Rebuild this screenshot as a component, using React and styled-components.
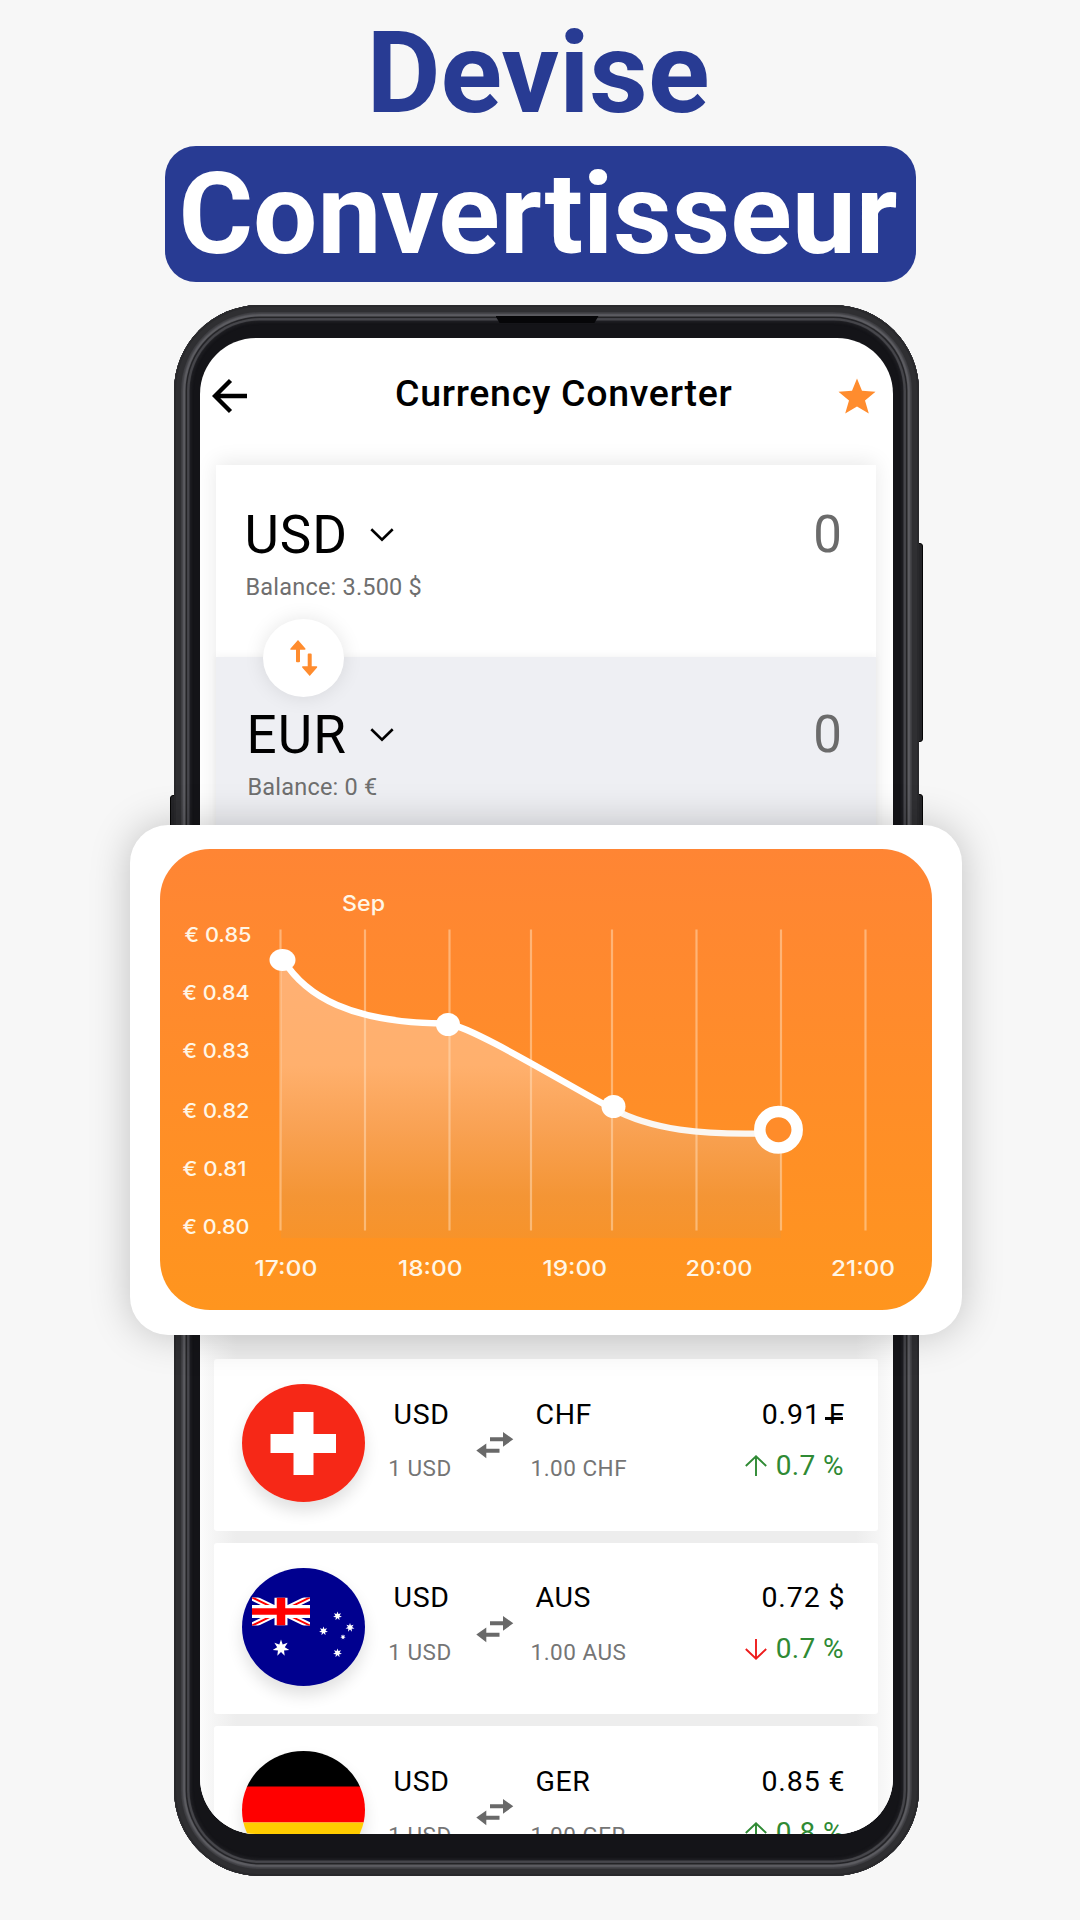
import React from "react";
import styled, { createGlobalStyle } from "styled-components";

const GlobalStyle = createGlobalStyle`
  * {
    box-sizing: border-box;
  }

  body {
    margin: 0;
    background-color: #f7f7f7;
    font-family: Roboto, "Liberation Sans", sans-serif;
    color: #000;
  }

  svg {
    display: block;
    flex-shrink: 0;
  }
`;

function BackArrow() {
  return (
    <svg width="36" height="36" viewBox="0 0 36 36" fill="none">
      <path d="M18.5 2.5 3 18l15.5 15.5M3 18h32" stroke="#000" strokeWidth="4.4" />
    </svg>
  );
}

function Star() {
  return (
    <svg width="38" height="36" viewBox="0 0 38 36">
      <path
        d="M19 .5l5 12.3 13.5 1-10.5 8.600 3.800 13.200L19 28.600 7.200 35.600 11 22.400.5 13.800l13.500-1z"
        fill="#ff8c2e"
      />
    </svg>
  );
}

function Chevron() {
  return (
    <svg width="24" height="14" viewBox="0 0 24 14" fill="none">
      <path d="M1.3 1.3 12 11.6 22.7 1.3" stroke="#000" strokeWidth="2.6" />
    </svg>
  );
}

function SwapVertical() {
  return (
    <svg width="28" height="36" viewBox="0 0 28 36" fill="#ff8c2e">
      <path d="M8 0l7.400 8.400q.6 1.400-.8 1.400H10v11.400q0 1-1 1H7q-1 0-1-1V9.800H1.300q-1.500 0-.8-1.400z" />
      <path d="M19.700 36l7.400-8.400q.6-1.400-.8-1.400H21.700V14.400q0-1-1-1h-2q-1 0-1 1v11.800H13q-1.500 0-.8 1.400z" />
    </svg>
  );
}

function SwapHorizontal() {
  return (
    <svg width="38" height="27" viewBox="0 0 38 27" fill="#696969">
      <path d="M37.300 7.300 27 0v5.300H14v4h13v5.400z" />
      <path d="M.3 18.500 10.300 11.500v5.200h13.200v4H10.300v5.500z" />
    </svg>
  );
}

function Trend({ down }) {
  return (
    <svg width="22" height="21" viewBox="0 0 22 21" fill="none">
      {down ? (
        <path d="M11 0v19.500M.8 10 11 19.700 21.200 10" stroke="#ee1c1c" strokeWidth="1.900" />
      ) : (
        <path d="M11 21V1.500M.8 11 11 1.300 21.200 11" stroke="#2f8a34" strokeWidth="1.900" />
      )}
    </svg>
  );
}

// seven pointed star of the australian flag
function starPoints(cx, cy, r) {
  const points = [];
  for (let i = 0; i < 14; i++) {
    const radius = i % 2 ? r * 0.46 : r;
    const angle = (Math.PI * i) / 7 - Math.PI / 2;
    points.push(`${cx + radius * Math.cos(angle)},${cy + radius * Math.sin(angle)}`);
  }
  return points.join(" ");
}

function SwissFlag() {
  return (
    <>
      <rect width="123" height="118" fill="#f62817" />
      <path d="M51.500 28h20v22h22.500v19H71.500v22h-20V69H28.500V50h23z" fill="#fff" />
    </>
  );
}

function AustralianFlag() {
  return (
    <>
      <rect width="123" height="118" fill="#00008f" />
      <svg x="10" y="29.500" width="58" height="28" viewBox="0 0 58 28">
        <path d="M0 0l58 28M58 0L0 28" stroke="#fff" strokeWidth="6" />
        <path d="M0 0l58 28M58 0L0 28" stroke="#f00" strokeWidth="2" />
        <path d="M29 0v28M0 14h58" stroke="#fff" strokeWidth="13" />
        <path d="M29 0v28" stroke="#f00" strokeWidth="8.500" />
        <path d="M0 14h58" stroke="#f00" strokeWidth="6.500" />
      </svg>
      <polygon points={starPoints(39, 80, 8.5)} fill="#fff" />
      <polygon points={starPoints(95.5, 48, 4.6)} fill="#fff" />
      <polygon points={starPoints(108, 59.5, 4.6)} fill="#fff" />
      <polygon points={starPoints(81.5, 63, 4.6)} fill="#fff" />
      <polygon points={starPoints(101, 69, 2.8)} fill="#fff" />
      <polygon points={starPoints(95.5, 85, 4.6)} fill="#fff" />
    </>
  );
}

function GermanFlag() {
  return (
    <>
      <rect width="123" height="36" fill="#000" />
      <rect y="35.500" width="123" height="36" fill="#f00" />
      <rect y="71.500" width="123" height="47" fill="#fc0" />
    </>
  );
}

function Chart() {
  const gridLines = [120.5, 205, 289.5, 371, 452, 536.5, 621, 705.5];

  const yLabels = [
    { text: "€ 0.85", x: 24.5, y: 93, width: 67 },
    { text: "€ 0.84", x: 22.5, y: 151, width: 67 },
    { text: "€ 0.83", x: 22.5, y: 208.5, width: 67 },
    { text: "€ 0.82", x: 22.5, y: 268.5, width: 67 },
    { text: "€ 0.81", x: 22.5, y: 326.5, width: 64 },
    { text: "€ 0.80", x: 22.5, y: 385, width: 67 },
  ];

  const xLabels = [
    { text: "17:00", x: 94.5, width: 63 },
    { text: "18:00", x: 238, width: 64.5 },
    { text: "19:00", x: 382.5, width: 64.5 },
    { text: "20:00", x: 525.5, width: 67 },
    { text: "21:00", x: 671, width: 64 },
  ];

  return (
    <svg width="772" height="461" viewBox="0 0 772 461">
      <defs>
        <linearGradient id="area" gradientUnits="userSpaceOnUse" x1="0" y1="111" x2="0" y2="389">
          <stop offset="0" stopColor="#ffb074" />
          <stop offset="0.38" stopColor="#ffb06d" />
          <stop offset="0.6" stopColor="#f9a254" />
          <stop offset="0.85" stopColor="#f49535" />
          <stop offset="1" stopColor="#f7932a" />
        </linearGradient>
      </defs>

      <path
        d="M121 110.500h2C145 146.500 190 174.500 288 174.500C315 179.500 400 231.500 452 259.500C490 280 540 285 621 283V389H121z"
        fill="url(#area)"
      />
      {gridLines.map((x) => (
        <line key={x} x1={x} x2={x} y1="80.500" y2="381.500" stroke="#ffe0bd" strokeOpacity="0.5" strokeWidth="2.200" />
      ))}
      <path
        d="M123 110.500C145 146.500 190 174.500 288 174.500C315 179.500 400 231.500 452 259.500"
        fill="none"
        stroke="#fff"
        strokeWidth="6.400"
      />
      <path d="M452 259.500C490 280 540 287 617 284" fill="none" stroke="#faf6f2" strokeWidth="6.400" />
      <ellipse cx="122.500" cy="111" rx="13" ry="11" fill="#fff" />
      <ellipse cx="288" cy="175.500" rx="12" ry="11.600" fill="#fff" />
      <ellipse cx="453.500" cy="257.500" rx="12" ry="11.600" fill="#fff" />
      <ellipse cx="618.500" cy="280.700" rx="18.700" ry="18.200" fill="#ff8c2a" stroke="#fff" strokeWidth="11.500" />

      <ChartLabel x="182" y="62" textLength="43">
        Sep
      </ChartLabel>
      {yLabels.map((label) => (
        <ChartLabel key={label.text} x={label.x} y={label.y} textLength={label.width} $small>
          {label.text}
        </ChartLabel>
      ))}
      {xLabels.map((label) => (
        <ChartLabel key={label.text} x={label.x} y="426.500" textLength={label.width}>
          {label.text}
        </ChartLabel>
      ))}
    </svg>
  );
}

function CurrencyPanel({ code, balance, shaded }) {
  return (
    <Panel $shaded={shaded}>
      <PanelRow>
        <Code $wide={shaded}>{code}</Code>
        <Chevron />
        <Amount>0</Amount>
      </PanelRow>
      <Balance $shaded={shaded}>Balance: {balance}</Balance>
    </Panel>
  );
}

function RateCard({ rate }) {
  const { to, value, change, down, Flag } = rate;

  return (
    <Card>
      <FlagCircle>
        <svg width="123" height="118" viewBox="0 0 123 118">
          <Flag />
        </svg>
      </FlagCircle>
      <CurrencyColumn $center>
        <Name>USD</Name>
        <Quantity>1 USD</Quantity>
      </CurrencyColumn>
      <SwapCell>
        <SwapHorizontal />
      </SwapCell>
      <CurrencyColumn>
        <Name $indent>{to}</Name>
        <Quantity>1.00 {to}</Quantity>
      </CurrencyColumn>
      <ValueColumn>
        <Value>{value}</Value>
        <Change>
          <Trend down={down} />
          {change}
        </Change>
      </ValueColumn>
    </Card>
  );
}

function App() {
  const rates = [
    {
      to: "CHF",
      value: (
        <>
          0.91 <Franc>F</Franc>
        </>
      ),
      change: "0.7 %",
      down: false,
      Flag: SwissFlag,
    },
    { to: "AUS", value: "0.72 $", change: "0.7 %", down: true, Flag: AustralianFlag },
    { to: "GER", value: "0.85 €", change: "0.8 %", down: false, Flag: GermanFlag },
  ];

  return (
    <>
      <GlobalStyle />
      <Page>
        <Headline>
          <Word>Devise</Word>
          <Highlight>Convertisseur</Highlight>
        </Headline>

        <Phone>
          <SideButton $side="right" $top={238} $height={199} />
          <SideButton $side="right" $top={489} $height={199} />
          <SideButton $side="left" $top={490} $height={199} />
          <Bezel>
            <Speaker />
            <Screen>
              <Header>
                <BackArrow />
                <Title>Currency Converter</Title>
                <Star />
              </Header>

              <Converter>
                <CurrencyPanel code="USD" balance="3.500 $" />
                <CurrencyPanel code="EUR" balance="0 €" shaded />
                <SwapButton>
                  <SwapVertical />
                </SwapButton>
              </Converter>

              <RateList>
                {rates.map((rate) => (
                  <RateCard key={rate.to} rate={rate} />
                ))}
              </RateList>
            </Screen>
          </Bezel>
        </Phone>

        <ChartCard>
          <ChartArea>
            <Chart />
          </ChartArea>
        </ChartCard>
      </Page>
    </>
  );
}

const Page = styled.div`
  position: relative;
  width: 1080px;
  height: 1920px;
  overflow: hidden;
  background-color: #f7f7f7;
`;

const Headline = styled.h1`
  display: flex;
  flex-direction: column;
  align-items: center;
  height: 305px;
  margin: 0;
  padding-top: 1px;
  font-size: 114px;
  font-weight: 700;
  line-height: 145px;
  color: #283b93;
`;

const Word = styled.span`
  padding-right: 4px;
`;

const Highlight = styled.span`
  width: 751px;
  height: 136px;
  padding-right: 4px;
  border-radius: 31px;
  background-color: #283b93;
  color: #fff;
  line-height: 137px;
  text-align: center;
  white-space: nowrap;
`;

const Phone = styled.div`
  position: relative;
  width: 745.5px;
  height: 1571px;
  margin-left: 173.5px;
`;

const Bezel = styled.div`
  position: relative;
  height: 100%;
  padding: 33px 26.5px 42px 26px;
  border-radius: 86px;
  background-color: #141418;
  box-shadow:
    inset 0 0 0 2px #29292c,
    inset 0 0 0 7px #2f2f32,
    inset 0 0 2px 9px #3c3c40,
    inset 0 0 1px 11.5px #626267,
    inset 0 0 1px 13px #1d1d20,
    inset 0 0 1px 15.5px #49494e,
    inset 0 0 2px 18px #1c1c20;
`;

const Speaker = styled.div`
  position: absolute;
  top: 11px;
  left: 322px;
  width: 103px;
  height: 7px;
  background-color: #060608;
  clip-path: polygon(0 0, 100% 0, 96% 100%, 4% 100%);
`;

const SideButton = styled.div`
  position: absolute;
  top: ${(props) => props.$top}px;
  ${(props) => props.$side}: -4px;
  width: 8px;
  height: ${(props) => props.$height}px;
  border-radius: 3px;
  border: 1.5px solid #050505;
  background-color: #252528;
`;

const Screen = styled.div`
  height: 1496px;
  overflow: hidden;
  border-radius: 56px;
  background-color: #fff;
`;

const Header = styled.div`
  display: flex;
  align-items: center;
  height: 127px;
  padding: 0 16.5px 11px 12px;
`;

const Title = styled.h2`
  flex: 1;
  margin: 0;
  padding: 0 0 7px 42px;
  font-size: 37.5px;
  font-weight: 500;
  letter-spacing: 0.7px;
  text-align: center;
`;

const Converter = styled.div`
  position: relative;
  margin: 0 17px 0 16px;
  box-shadow: 0 -3px 20px rgba(0, 0, 0, 0.09);
`;

const Panel = styled.div`
  height: ${(props) => (props.$shaded ? 220 : 192)}px;
  padding: ${(props) => (props.$shaded ? "48px 33.5px 0 31px" : "39.5px 33.5px 0 29px")};
  background-color: ${(props) => (props.$shaded ? "#eeeff3" : "#fff")};
  box-shadow: ${(props) => (props.$shaded ? "0 -1px 8px rgba(0, 0, 0, 0.05)" : "none")};
`;

const PanelRow = styled.div`
  display: flex;
  align-items: center;
  height: 60px;
`;

const Code = styled.span`
  width: ${(props) => (props.$wide ? 123 : 125)}px;
  font-size: 53px;
  line-height: 60px;
  letter-spacing: ${(props) => (props.$wide ? 1.1 : 1)}px;
`;

const Amount = styled.span`
  margin-left: auto;
  font-size: 51px;
  line-height: 60px;
  color: #6b6b6b;
`;

const Balance = styled.div`
  margin-top: 7px;
  padding-left: 1px;
  font-size: 23.5px;
  line-height: 30px;
  letter-spacing: 0.2px;
  color: #6f6f6f;
`;

const SwapButton = styled.div`
  position: absolute;
  top: 154px;
  left: 47.5px;
  display: flex;
  align-items: center;
  justify-content: center;
  width: 81px;
  height: 78px;
  border-radius: 50%;
  background-color: #fff;
  box-shadow: 0 0 20px rgba(0, 0, 0, 0.1);
`;

const RateList = styled.div`
  display: flex;
  flex-direction: column;
  gap: 12px;
  margin-top: 423px;
  padding: 59px 15px 0 14px;
  background: linear-gradient(
    90deg,
    #fcfcfc 0,
    #f5f5f5 14px,
    #ededed 36px,
    #ededed 656px,
    #f5f5f5 678px,
    #fcfcfc 100%
  );
`;

const Card = styled.div`
  display: flex;
  align-items: flex-start;
  height: 171.5px;
  padding: 0 33.5px 0 28px;
  border-radius: 3px;
  background-color: #fff;
`;

const FlagCircle = styled.div`
  width: 123px;
  height: 118px;
  margin-top: 25px;
  overflow: hidden;
  border-radius: 50%;
  box-shadow: 0 9px 16px rgba(0, 0, 0, 0.12);
`;

const CurrencyColumn = styled.div`
  width: ${(props) => (props.$center ? 111 : 131)}px;
  padding-top: 38.5px;
  text-align: ${(props) => (props.$center ? "center" : "left")};
`;

const SwapCell = styled.div`
  width: 55px;
  padding-top: 73px;
`;

const ValueColumn = styled.div`
  display: flex;
  flex-direction: column;
  align-items: flex-end;
  margin-left: auto;
  padding-top: 38.5px;
`;

const Name = styled.div`
  padding-left: ${(props) => (props.$indent ? 5 : 3)}px;
  font-size: 28.5px;
  line-height: 34px;
  letter-spacing: 0.6px;
`;

const Value = styled.div`
  margin-right: -1.5px;
  font-size: 28.5px;
  line-height: 34px;
  letter-spacing: 0.9px;
`;

// F crossed by a bar under its middle arm
const Franc = styled.span`
  position: relative;

  &::after {
    content: "";
    position: absolute;
    left: -3.5px;
    bottom: 11px;
    width: 18px;
    height: 2.5px;
    background-color: #000;
  }
`;

const Quantity = styled.div`
  margin-top: 23.5px;
  font-size: 22.5px;
  line-height: 26px;
  letter-spacing: 0.5px;
  color: #757575;
`;

const Change = styled.div`
  display: flex;
  align-items: center;
  gap: 8.5px;
  margin-top: 17px;
  font-size: 28px;
  line-height: 34px;
  letter-spacing: 0.4px;
  color: #2f8a34;
`;

// the chart floats over the middle of the phone
const ChartCard = styled.div`
  position: absolute;
  top: 825px;
  left: 130px;
  width: 832px;
  height: 510px;
  padding: 24px 30px;
  border-radius: 38px;
  background-color: #fff;
  box-shadow: 0 0 40px rgba(0, 0, 0, 0.22);
`;

const ChartArea = styled.div`
  width: 772px;
  height: 461px;
  overflow: hidden;
  border-radius: 50px;
  background: linear-gradient(#ff8534, #ff951e);
`;

const ChartLabel = styled.text.attrs({ lengthAdjust: "spacingAndGlyphs" })`
  fill: #fff6e6;
  font-family: Inter, Roboto, sans-serif;
  font-size: ${(props) => (props.$small ? 20.5 : 22)}px;
  font-weight: 500;
`;

export default App;
